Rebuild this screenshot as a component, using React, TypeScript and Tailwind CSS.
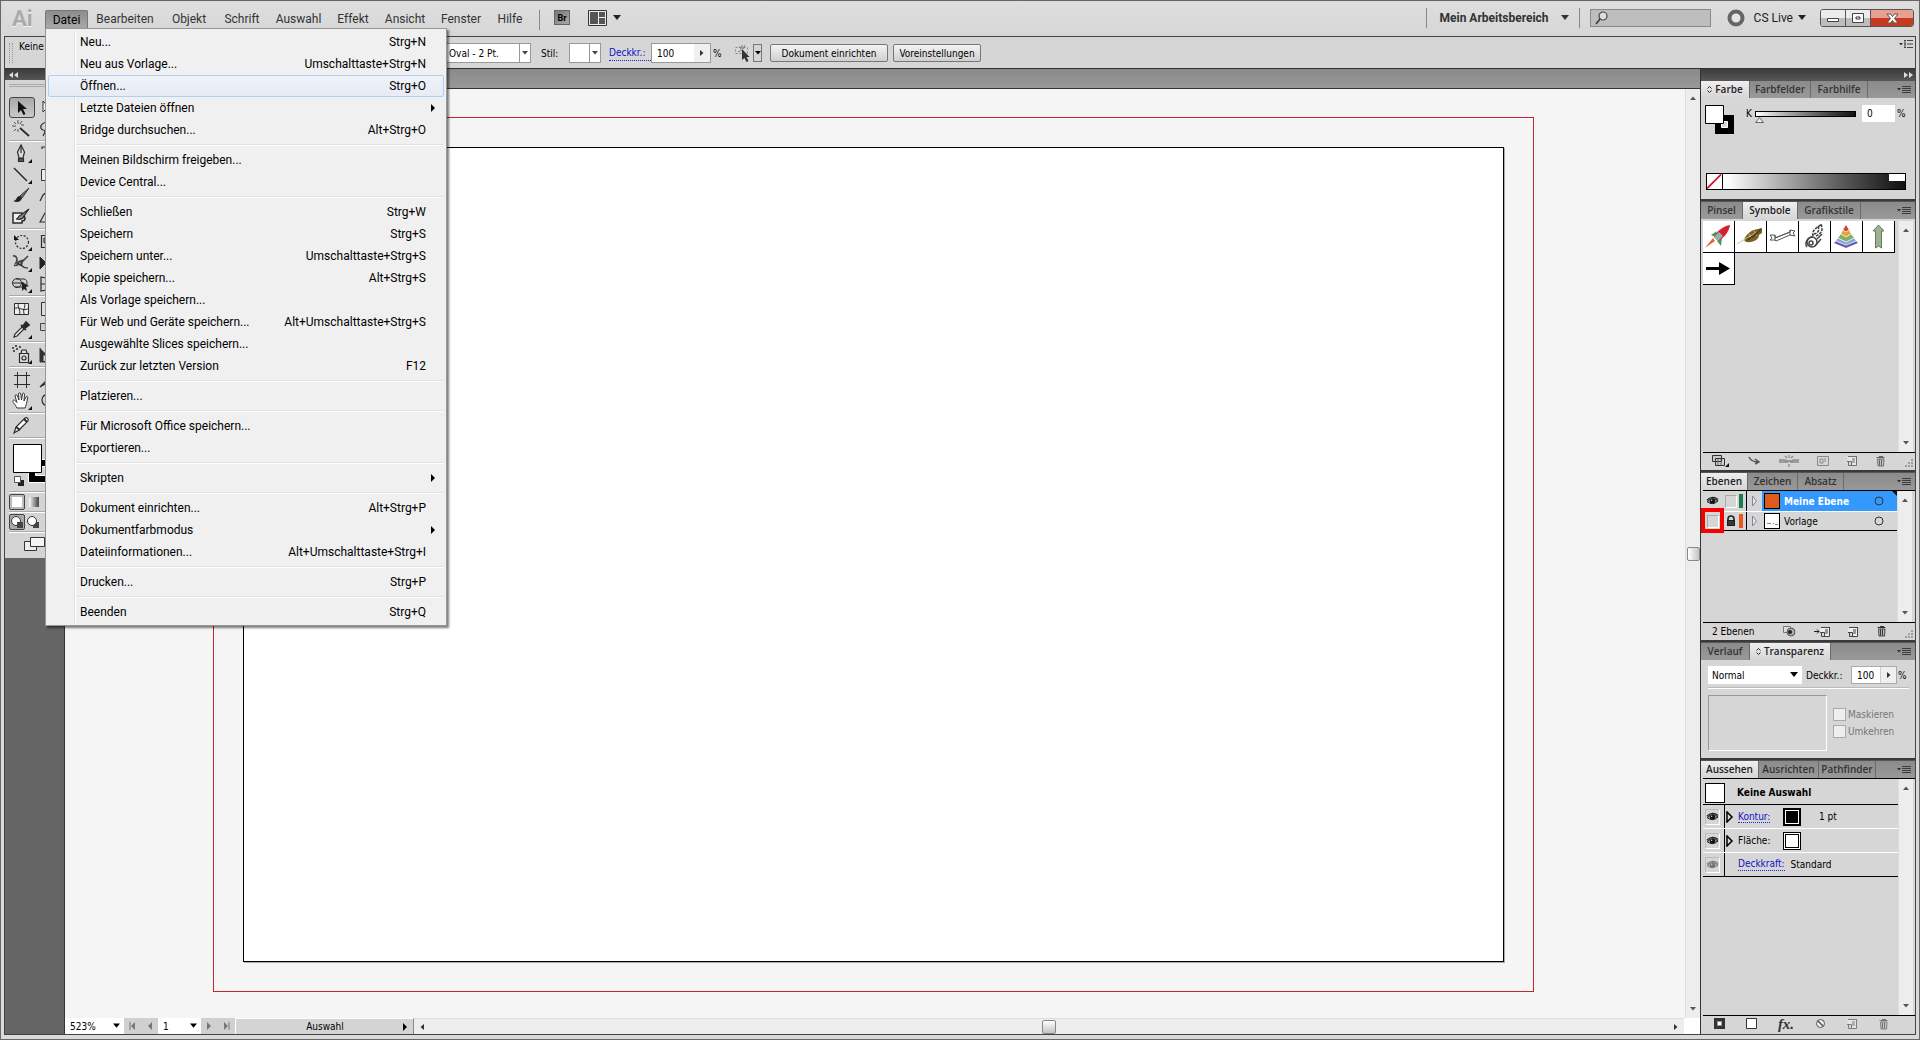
import React, { useState } from 'react';
import clsx from 'clsx';

type MenuEntry = { label: string; keys?: string; sub?: boolean } | null;

const FILE_MENU: MenuEntry[] = [
  { label: 'Neu...', keys: 'Strg+N' },
  { label: 'Neu aus Vorlage...', keys: 'Umschalttaste+Strg+N' },
  { label: 'Öffnen...', keys: 'Strg+O' },
  { label: 'Letzte Dateien öffnen', sub: true },
  { label: 'Bridge durchsuchen...', keys: 'Alt+Strg+O' },
  null,
  { label: 'Meinen Bildschirm freigeben...' },
  { label: 'Device Central...' },
  null,
  { label: 'Schließen', keys: 'Strg+W' },
  { label: 'Speichern', keys: 'Strg+S' },
  { label: 'Speichern unter...', keys: 'Umschalttaste+Strg+S' },
  { label: 'Kopie speichern...', keys: 'Alt+Strg+S' },
  { label: 'Als Vorlage speichern...' },
  { label: 'Für Web und Geräte speichern...', keys: 'Alt+Umschalttaste+Strg+S' },
  { label: 'Ausgewählte Slices speichern...' },
  { label: 'Zurück zur letzten Version', keys: 'F12' },
  null,
  { label: 'Platzieren...' },
  null,
  { label: 'Für Microsoft Office speichern...' },
  { label: 'Exportieren...' },
  null,
  { label: 'Skripten', sub: true },
  null,
  { label: 'Dokument einrichten...', keys: 'Alt+Strg+P' },
  { label: 'Dokumentfarbmodus', sub: true },
  { label: 'Dateiinformationen...', keys: 'Alt+Umschalttaste+Strg+I' },
  null,
  { label: 'Drucken...', keys: 'Strg+P' },
  null,
  { label: 'Beenden', keys: 'Strg+Q' },
];

const MENUS = [
  { label: 'Bearbeiten', width: 'w-[74px]' },
  { label: 'Objekt', width: 'w-[54px]' },
  { label: 'Schrift', width: 'w-[52px]' },
  { label: 'Auswahl', width: 'w-[61px]' },
  { label: 'Effekt', width: 'w-[48px]' },
  { label: 'Ansicht', width: 'w-[56px]' },
  { label: 'Fenster', width: 'w-[56px]' },
  { label: 'Hilfe', width: 'w-[42px]' },
];

/* ---------- small glyphs ---------- */

function Down({ className = '' }: { className?: string }) {
  return (
    <svg width="8" height="6" viewBox="0 0 8 6" className={clsx('shrink-0', className)}>
      <path d="M0 0h8L4 5z" fill="currentColor" />
    </svg>
  );
}

function DownSmall({ className = '' }: { className?: string }) {
  return (
    <svg width="6" height="4" viewBox="0 0 6 4" className={clsx('shrink-0', className)}>
      <path d="M0 0h6L3 3.5z" fill="currentColor" />
    </svg>
  );
}

function Side({ left = false, bar = false, className = '' }: { left?: boolean; bar?: boolean; className?: string }) {
  return (
    <svg width="7" height="8" viewBox="0 0 7 8" className={clsx('shrink-0', className, left && 'rotate-180')}>
      <path d="M1 0v8l4-4z" fill="currentColor" />
      {bar && <path d="M6 0v8" stroke="currentColor" />}
    </svg>
  );
}

function SideSmall({ left = false }: { left?: boolean }) {
  return (
    <svg width="4" height="6" viewBox="0 0 4 6" className={clsx('shrink-0 text-[#333]', left && 'rotate-180')}>
      <path d="M0 0v6l3.500-3z" fill="currentColor" />
    </svg>
  );
}

function Eye({ faded = false }: { faded?: boolean }) {
  return (
    <svg width="13" height="10" viewBox="0 0 13 10" className={clsx('shrink-0', faded && 'opacity-50')}>
      <path d="M1 5.5Q6.500 0 12 5Q6.500 10 1 5.500z" fill="#8a8a8a" stroke="#222" />
      <path d="M1 4Q6.500 -1 12 3.500" fill="none" stroke="#222" strokeWidth="1.200" />
      <circle cx="6.500" cy="5" r="2.600" fill="#111" />
      <circle cx="5.700" cy="4.200" r=".7" fill="#ddd" />
    </svg>
  );
}

function Lock() {
  return (
    <svg width="10" height="12" viewBox="0 0 10 12">
      <path d="M2 6V4a3 3 0 0 1 6 0v2" fill="none" stroke="#222" strokeWidth="1.600" />
      <path d="M1 5h8v6H1z" fill="#1c1c1c" />
      <path d="M2 7h6M2 9h6" stroke="#555" />
    </svg>
  );
}

function NewPage() {
  return (
    <svg width="11" height="11" viewBox="0 0 11 11">
      <path d="M.5 1.500h9v9h-5v-4h-4z" fill="#eee" />
      <path d="M0 6.500h4.500V10M9.500 1v9.500H1.500V7M1 1.500h8" fill="none" stroke="#444" />
      <path d="M5 3h3v5H5z" fill="#999" />
    </svg>
  );
}

function Trash() {
  return (
    <svg width="10" height="12" viewBox="0 0 10 12">
      <path d="M.5 2.500h8M3 1.500h4" stroke="#333" strokeWidth="1.200" />
      <path d="M1.500 4h6.500l-.5 7h-5.500z" fill="#bbb" stroke="#444" />
      <path d="M3.500 4.500v6M5.500 4.500v6" stroke="#333" />
    </svg>
  );
}

function Grip() {
  return (
    <svg width="9" height="9" viewBox="0 0 9 9">
      <path d="M8 0v2M8 3v2M8 6v2M5 3v2M5 6v2M2 6v2" stroke="#8a8a8a" strokeWidth="1.500" />
    </svg>
  );
}

function PanelMenuIcon() {
  return (
    <svg width="14" height="10" viewBox="0 0 14 10">
      <path d="M0 3h4L2 5.500z" fill="#2e2e2e" />
      <path d="M5 1.500h9M5 3.500h9M5 5.500h9M5 7.500h9" stroke="#3c3c3c" />
    </svg>
  );
}

/* ---------- tools ---------- */

const ink = { fill: 'none', stroke: '#2b2b2b', strokeWidth: 1.2 };

const TOOL_ICONS: Record<string, React.ReactNode> = {
  select: <path d="M7 3v12l3-3 2.500 5 2-1-2.500-5h4z" fill="#111" />,
  direct: <path d="M6 3v11l3-3 4 0z" fill="#fff" stroke="#333" />,
  wand: (
    <g {...ink}>
      <path d="M9 9l9 8" strokeWidth="1.800" />
      <path d="M7 1v4M1 7h4M7 10v3M10 6h3M3 3l2 2M11 2L9 5M3 12l2-2" stroke="#555" strokeWidth="1" />
    </g>
  ),
  lasso: <path d="M12 3C3 3 2 10 6 11c4 0 1 4 0 6" {...ink} />,
  pen: (
    <g {...ink}>
      <path d="M10 1L6.500 8l1.500 6h4l1.500-6z" fill="#ddd" />
      <path d="M10 1v8M7.500 14.500h5v3h-5z" fill="#555" />
    </g>
  ),
  type: <path d="M5 5V3h12v2M11 3v13" {...ink} />,
  line: <path d="M3 3l13 13" {...ink} strokeWidth="1.500" />,
  rect: <path d="M4.500 4.500h14v11h-14z" fill="#eee" stroke="#333" />,
  brush: (
    <g>
      <path d="M18 2L9 10l2 2 7-10z" fill="#777" stroke="#333" />
      <path d="M9 10c-4 0-3 5-7 5 4 2 8 1 9-3z" fill="#222" />
    </g>
  ),
  pencil: <path d="M3 15l3-6 9-7" {...ink} />,
  blob: (
    <g {...ink}>
      <path d="M2 6h9v3c4 0 4 5 0 5v2H2z" fill="#eee" strokeWidth="1.500" />
      <path d="M18 2l-8 6c-3 0-2 4-5 4 4 1 7 0 8-3z" fill="#888" />
    </g>
  ),
  eraser: <path d="M3 15l5-9h8l-4 9z" {...ink} />,
  rotate: (
    <g {...ink}>
      <circle cx="11" cy="10" r="6.500" strokeDasharray="2 1.500" />
      <path d="M3 3v5h5z" fill="#111" stroke="none" />
    </g>
  ),
  scale: <path d="M4.500 3.500h12v12h-12zM7 6h4M7 6v4l6 5" {...ink} />,
  warp: (
    <g {...ink}>
      <path d="M2 3c4-1 5 4 3 7 4-1 6 6 12 5M8 12L17 3M3 12c5 3 5-6 10-5" stroke="#444" strokeWidth="1.600" />
      <circle cx="9" cy="10" r="2" fill="#777" />
    </g>
  ),
  free: <path d="M3 4l6 6-6 6zM9 5h8v10H9z" fill="#222" stroke="#222" />,
  shape: (
    <g {...ink}>
      <circle cx="6" cy="9" r="4.500" fill="#ccc" strokeWidth="1" />
      <path d="M5 5h8c4 0 4 8 0 8H4M2 9h11" strokeWidth="1" />
      <path d="M11 8v9l2-2 3 2-1-4 3-1z" fill="#222" stroke="none" />
    </g>
  ),
  persp: <path d="M4 3l14 3v8L4 17zM4 10h14M9 4v12" {...ink} />,
  mesh: (
    <g {...ink} strokeWidth="1">
      <path d="M3.500 4.500h14v11h-14z" fill="#eee" />
      <path d="M8 4c-3 4 3 7 0 12M13 4c3 4-3 7 1 12M3 10c5-4 9 4 15-1" />
    </g>
  ),
  gradient: <path d="M4.500 3.500h14v13h-14z" fill="#ddd" stroke="#333" />,
  dropper: (
    <g {...ink}>
      <path d="M3 17l1-3 7-7 2 2-7 7z" fill="#eee" />
      <path d="M10 5l5 5M12 6l3-4 3 3-4 3z" fill="#222" strokeWidth="1.800" />
    </g>
  ),
  blend: <path d="M3.500 3.500h7v7h-7zM8.500 8.500h8v8h-8z" fill="#ccc" stroke="#444" />,
  spray: (
    <g {...ink}>
      <path d="M8.500 8.500h9v9h-9zM10 8l1-3h4l1 3" fill="#ddd" />
      <path d="M1 3h2M4 1h2M5 4h2M8 2h2M2 6h2" strokeWidth="1.500" />
      <circle cx="13" cy="13" r="2" />
    </g>
  ),
  graph: <path d="M3 3v14h14M6 16v-6h3v6" fill="#333" stroke="#333" />,
  artboard: <path d="M6.500 2v16M15.500 2v16M3 5.500h16M3 14.500h16" {...ink} strokeWidth="1" />,
  slice: <path d="M3 17L14 6l3 3-9 5z" {...ink} />,
  hand: (
    <path
      d="M6 17C4 13 1 11 2 9.500s3 1 4 2L4 5c0-1.500 2-1.500 2.500 0l1.500 4-.5-6c0-1.500 2-1.500 2.300 0L10.500 9l1-6c.3-1.500 2-1 2 .3L13 10l2-4c.7-1.200 2-.5 1.700.7C16 11 15 15 14 17z"
      fill="#fff"
      stroke="#333"
    />
  ),
  zoom: <circle cx="11" cy="9" r="6" {...ink} />,
  erase: (
    <g {...ink}>
      <path d="M3 17l2-6L14 2c2-1 4 1 3 3L8 14z" fill="#fff" />
      <path d="M5 11l4 3M13 3l3 3" strokeWidth="2" />
    </g>
  ),
};

const TOOL_GROUPS = [
  [['select', 'direct'], ['wand', 'lasso']],
  [['pen', 'type'], ['line', 'rect'], ['brush', 'pencil'], ['blob', 'eraser']],
  [['rotate', 'scale'], ['warp', 'free'], ['shape', 'persp']],
  [['mesh', 'gradient'], ['dropper', 'blend']],
  [['spray', 'graph']],
  [['artboard', 'slice'], ['hand', 'zoom']],
  [['erase']],
];

const FLYOUTS = ['pen', 'line', 'rotate', 'warp', 'shape', 'dropper', 'spray', 'hand'];

function Tool({ name }: { name: string }) {
  return (
    <button
      aria-label={name}
      className={clsx(
        'flex h-[21px] w-[26px] items-center justify-center',
        name === 'select' && 'rounded-[3px] border border-[#444] bg-gradient-to-b from-[#a9a9a9] to-[#c9c9c9]',
      )}
    >
      <svg width="22" height="20" viewBox="0 0 22 20" className="shrink-0">
        {TOOL_ICONS[name]}
        {FLYOUTS.includes(name) && <path d="M21 15v4h-4z" fill="#111" />}
      </svg>
    </button>
  );
}

function Rule() {
  return <div className="my-px h-[2px] border-t border-[#aaa] bg-white" />;
}

function Toolbox() {
  return (
    <aside className="w-[59px] shrink-0 bg-[#656565]">
      <div className="flex h-[11px] items-center bg-gradient-to-b from-[#3c3c3c] to-[#555] pl-1 text-[#ddd]">
        <svg width="9" height="6" viewBox="0 0 9 6"><path d="M4 0v6L0 3zM9 0v6L5 3z" fill="currentColor" /></svg>
      </div>
      <div className="bg-[#d4d4d4] pb-1 pl-1">
        <div className="h-[17px] pt-1"><div className="h-[3px] border-y border-[#aaa]" /></div>
        {TOOL_GROUPS.map((group, i) => (
          <div key={i}>
            {group.map((row) => (
              <div key={row[0]} className="flex">
                {row.map((t) => <Tool key={t} name={t} />)}
              </div>
            ))}
            <Rule />
          </div>
        ))}
        <svg width="54" height="50" viewBox="0 0 54 50" className="block">
          <path d="M19.500 19.500h27v23h-27z" fill="#000" stroke="#fff" />
          <path d="M26.500 26.500h13v9h-13z" fill="#d4d4d4" stroke="#fff" />
          <path d="M4.500 4.500h28v28h-28z" fill="#fff" stroke="#000" />
          <path d="M9 40h6v6H9z" fill="#222" />
          <path d="M5.500 36.500h6v6h-6z" fill="#fff" stroke="#555" />
        </svg>
        <Rule />
        <div className="flex h-4 items-center gap-1">
          <button aria-label="Farbe" className="h-4 w-4 rounded-[2px] border border-[#444] bg-[#bbb] p-[2px]"><span className="block h-full bg-white" /></button>
          <button aria-label="Verlauf" className="h-[10px] w-[10px] bg-gradient-to-r from-white to-[#444]" />
        </div>
        <Rule />
        <div className="flex h-4 items-center gap-px">
          {[0, 1].map((n) => (
            <button key={n} aria-label={n ? 'Dahinter zeichnen' : 'Normal zeichnen'} className={clsx('h-4 w-4', !n && 'rounded-[2px] border border-[#444] bg-[#aaa]')}>
              <svg width="14" height="14" viewBox="0 0 14 14">
                <path d="M7 7h6v6H7z" fill="#444" />
                <circle cx="6" cy="6" r="4.500" fill="#fff" stroke="#333" />
                {!n && <path d="M7 7h6v6H7z" fill="#444" />}
              </svg>
            </button>
          ))}
        </div>
        <Rule />
        <svg width="40" height="20" viewBox="0 0 40 20" className="block">
          <path d="M15.500 7.500h12v9h-12z" fill="#eee" stroke="#333" />
          <path d="M21.500 3.500h14v9h-14z" fill="#f5f5f5" stroke="#333" />
        </svg>
      </div>
    </aside>
  );
}

/* ---------- top bars ---------- */

function FileMenu() {
  return (
    <div
      role="menu"
      className="absolute left-0 top-full z-20 w-[402px] border border-[#979797] bg-[#f0f0f0] p-[2px] text-black shadow-[2px_2px_2px_rgba(0,0,0,0.5)]"
    >
      <div className="absolute inset-y-[2px] left-[28px] w-[2px] border-l border-[#e0e0e0] bg-white" />
      {FILE_MENU.map((item, i) =>
        item ? (
          <button
            key={i}
            role="menuitem"
            className={clsx(
              'relative flex h-[22px] w-full items-center rounded-[2px] border pl-[31px] text-left',
              item.label === 'Öffnen...' ? 'border-[#aecff7] bg-gradient-to-b from-[#f0f2f7] to-[#e6ebf5]' : 'border-transparent',
            )}
          >
            <span className="flex-1">{item.label}</span>
            {item.keys && <span className="pr-[17px]">{item.keys}</span>}
            {item.sub && <Side className="mr-[6px]" />}
          </button>
        ) : (
          <div key={i} className="ml-7 flex h-2 items-center">
            <div className="h-[2px] w-full border-t border-[#e0e0e0] bg-white" />
          </div>
        ),
      )}
    </div>
  );
}

function MenuBar() {
  const [open, setOpen] = useState(true);
  return (
    <header className="flex h-[34px] items-start justify-between bg-gradient-to-b from-[#dedede] to-[#d6d6d6] text-[12px] leading-4 text-[#333]">
      <nav className="flex items-start pt-2">
        <span className="w-[41px] pl-2 text-[22px] font-bold leading-[18px] text-[#aaa] [text-shadow:0_1px_0_#f4f4f4]">Ai</span>
        <div className="relative">
          <button
            onClick={() => setOpen(!open)}
            className="block h-[18px] w-[43px] rounded-t-[2px] border border-b-0 border-[#777] bg-gradient-to-b from-[#8d8d8d] to-[#a8a8a8] text-black"
          >
            Datei
          </button>
          {open && <FileMenu />}
        </div>
        {MENUS.map((m) => (
          <button key={m.label} className={clsx('h-[18px] whitespace-nowrap', m.width)}>{m.label}</button>
        ))}
        <div className="ml-2 h-5 border-l border-[#888]" />
        <button className="ml-[14px] h-[15px] w-4 border border-[#666] bg-gradient-to-br from-[#777] to-[#aaa] text-[9px] font-bold leading-3 text-black">Br</button>
        <button aria-label="Dokumente anordnen" className="ml-[18px] flex items-center gap-[6px] text-[#222]">
          <svg width="19" height="16" viewBox="0 0 19 16">
            <path d="M.5.5h18v15H.5z" fill="#eee" stroke="#333" />
            <path d="M2 2h8v12H2zM11 2h6v5h-6zM11 8h6v6h-6z" fill="#555" />
          </svg>
          <Down />
        </button>
      </nav>
      <div className="flex items-center pt-[6px] pr-[2px]">
        <div className="h-5 border-l border-[#888]" />
        <button className="ml-3 flex items-center gap-3 font-bold">Mein Arbeitsbereich<Down /></button>
        <div className="ml-[10px] h-5 border-l border-[#888]" />
        <label className="ml-[10px] flex h-[18px] w-[121px] items-center border border-[#888] bg-[#bebebe] pl-1">
          <svg width="14" height="14" viewBox="0 0 14 14" className="shrink-0">
            <circle cx="8" cy="5" r="4" fill="#ddd" stroke="#444" strokeWidth="1.200" />
            <path d="M5 8l-4 5" stroke="#333" strokeWidth="1.500" />
          </svg>
          <input aria-label="Suchen" className="w-full min-w-0 bg-transparent outline-none" />
        </label>
        <svg width="18" height="18" viewBox="0 0 18 18" className="ml-4">
          <circle cx="9" cy="9" r="6.500" fill="#e6e6e6" stroke="#666" strokeWidth="4" />
        </svg>
        <button className="ml-[9px] flex items-center gap-[5px] whitespace-nowrap text-[#222]">CS Live<Down /></button>
        <div className="ml-[14px] flex h-[18px] overflow-hidden rounded-[3px] border border-[#555]">
          <button aria-label="Minimieren" className="flex w-[25px] items-center justify-center border-r border-[#555] bg-gradient-to-b from-[#ececec] from-50% to-[#bdbdbd] to-50%">
            <svg width="12" height="10" viewBox="0 0 12 10"><path d="M.5 5.500h11v3H.5z" fill="#fff" stroke="#444" /></svg>
          </button>
          <button aria-label="Maximieren" className="flex w-[25px] items-center justify-center border-r border-[#555] bg-gradient-to-b from-[#ececec] from-50% to-[#bdbdbd] to-50%">
            <svg width="12" height="10" viewBox="0 0 12 10"><path d="M.5.5h11v9H.5z" fill="#fff" stroke="#444" /><path d="M4 4h4v2H4z" fill="#fff" stroke="#333" /></svg>
          </button>
          <button aria-label="Schließen" className="flex w-[42px] items-center justify-center bg-gradient-to-b from-[#e8a090] from-50% to-[#c63a22] to-50%">
            <svg width="13" height="11" viewBox="0 0 13 11">
              <path d="M1 1h3.500l2 2.500L8.500 1H12L8.500 5.500 12 10H8.500l-2-2.500-2 2.500H1l3.500-4.500z" fill="#fff" stroke="#555" />
            </svg>
          </button>
        </div>
      </div>
    </header>
  );
}

function ControlBar() {
  return (
    <div className="flex h-8 items-start justify-between border-t border-[#444] bg-[#d6d6d6] text-[10px]">
      <div className="flex items-center pt-1">
        <div className="ml-1 h-5 w-1 border-x border-dotted border-[#999]" />
        <span className="ml-[6px] w-[424px] pb-3 leading-3">Keine Auswahl</span>
        <div className="flex h-5 w-[88px] border border-[#999] bg-white">
          <input aria-label="Pinseldefinition" defaultValue="Oval - 2 Pt." className="w-0 flex-1 pl-[5px] outline-none" />
          <button aria-label="Pinsel wählen" className="flex w-[11px] items-center justify-center border-l border-[#999] text-[#444]"><DownSmall /></button>
        </div>
        <span className="ml-[10px] w-[28px]">Stil:</span>
        <div className="flex h-5 w-8 border border-[#999] bg-white">
          <span className="flex-1" />
          <button aria-label="Grafikstil" className="flex w-[11px] items-center justify-center border-l border-[#999] text-[#444]"><DownSmall /></button>
        </div>
        <a href="#" className="ml-2 w-[42px] whitespace-nowrap border-b border-dotted border-[#22c] leading-[14px] text-[#1111cc]">Deckkr.:</a>
        <div className="flex h-5 w-[60px] border border-[#999] bg-white">
          <input aria-label="Deckkraft" defaultValue="100" className="w-0 flex-1 pl-[5px] outline-none" />
          <button aria-label="Deckkraft wählen" className="flex w-4 items-center justify-center bg-[#f0f0f0]"><SideSmall /></button>
        </div>
        <span className="ml-[2px] w-[21px]">%</span>
        <button aria-label="Ähnliche Objekte auswählen" className="flex items-center gap-px">
          <svg width="18" height="18" viewBox="0 0 18 18">
            <path d="M1.500 3.500h12v6h-12z" fill="none" stroke="#888" strokeDasharray="2 2" />
            <path d="M8 1v4M5 2l2 3M11 1L9 5M4 8l4-2" stroke="#666" strokeWidth=".8" />
            <path d="M8 5v11l2.500-2 2 4 2-1-2-4h3z" fill="#333" />
          </svg>
          <span className="flex h-[18px] w-[9px] items-center justify-center border border-[#777]"><DownSmall /></span>
        </button>
        <button className="ml-2 h-[18px] w-[118px] whitespace-nowrap rounded-[2px] border border-[#777] bg-gradient-to-b from-[#f4f4f4] to-[#cfcfcf]">Dokument einrichten</button>
        <button className="ml-[5px] h-[18px] w-[88px] whitespace-nowrap rounded-[2px] border border-[#777] bg-gradient-to-b from-[#f4f4f4] to-[#cfcfcf]">Voreinstellungen</button>
      </div>
      <button aria-label="Bedienfeldmenü" className="pt-[3px] pr-[2px]">
        <svg width="14" height="9" viewBox="0 0 14 9">
          <path d="M0 3h4L2 5.500z" fill="#333" />
          <path d="M5 .500h2M8 .500h6M5 4h2M8 4h6M5 7.500h2M8 7.500h6M6 0v8" stroke="#444" />
        </svg>
      </button>
    </div>
  );
}

/* ---------- document ---------- */

function VScroll({ thumb = false }: { thumb?: boolean }) {
  return (
    <div className="flex w-[15px] shrink-0 flex-col items-center justify-between border-l border-[#ddd] bg-[#ededed] py-[7px] text-[#555]">
      <DownSmall className="rotate-180" />
      {thumb && <div className="h-[14px] w-[13px] rounded-[2px] border border-[#888] bg-gradient-to-r from-white to-[#c4c4c4]" />}
      <DownSmall />
    </div>
  );
}

function StatusBar() {
  return (
    <div className="flex h-4 shrink-0 bg-[#d0d0d0] text-[10px]">
      <div className="flex w-[59px] items-center bg-white pr-1">
        <input aria-label="Zoom" defaultValue="523%" className="w-0 flex-1 pl-[5px] outline-none" />
        <Down className="w-[7px]" />
      </div>
      <div className="flex w-[34px] items-center justify-around text-[#777]"><Side left bar /><Side left /></div>
      <div className="flex w-[43px] items-center bg-white pr-1">
        <input aria-label="Zeichenfläche" defaultValue="1" className="w-0 flex-1 pl-[5px] outline-none" />
        <Down className="w-[7px]" />
      </div>
      <div className="flex w-[34px] items-center justify-around text-[#777]"><Side /><Side bar /></div>
      <button className="flex w-[179px] items-center border-l border-t border-white border-r border-r-[#888] bg-[#d4d4d4] pl-3 pr-1">
        <span className="flex-1">Auswahl</span>
        <Side className="h-[10px]" />
      </button>
      <div className="flex flex-1 items-center justify-between border-t border-[#ddd] bg-[#ededed] px-[6px]">
        <SideSmall left />
        <div className="h-[14px] w-[14px] rounded-[2px] border border-[#888] bg-gradient-to-b from-white to-[#c4c4c4]" />
        <SideSmall />
      </div>
      <div className="w-4 bg-white" />
    </div>
  );
}

function DocumentArea() {
  return (
    <main className="flex min-w-0 flex-1 flex-col border-l border-[#333]">
      <div className="h-5 border-b border-[#333] bg-gradient-to-b from-[#8a8a8a] to-[#989898]" />
      <div className="flex min-h-0 flex-1">
        <div className="flex flex-1 bg-[#f5f5f5] pt-7 pr-[151px] pb-[26px] pl-[148px]">
          <div className="flex flex-1 border border-[#c1272d] p-[29px]">
            <div className="flex-1 border border-black bg-white shadow-[1px_1px_0_#aaa]" />
          </div>
        </div>
        <VScroll thumb />
      </div>
      <StatusBar />
    </main>
  );
}

/* ---------- panels ---------- */

interface Tab {
  label: string;
  width: string;
  active?: boolean;
  expander?: boolean;
}

function Tabs({ tabs }: { tabs: Tab[] }) {
  return (
    <div className="flex h-[18px] shrink-0 items-stretch border-t border-[#555] bg-gradient-to-b from-[#8b8b8b] to-[#999]">
      {tabs.map((t) => (
        <button
          key={t.label}
          className={clsx(
            "flex items-center justify-center gap-[3px] whitespace-nowrap border-r border-[#6b6b6b] font-['Open_Sans','Noto_Sans',sans-serif] text-[10px] font-semibold",
            t.width,
            t.active ? 'bg-gradient-to-b from-[#eee] to-[#d6d6d6] text-[#222]' : 'text-[#333]',
          )}
        >
          {t.expander && (
            <svg width="5" height="7" viewBox="0 0 5 7"><path d="M.5 2.500l2-2 2 2M.5 4.500l2 2 2-2" fill="none" stroke="#222" /></svg>
          )}
          {t.label}
        </button>
      ))}
      <div className="flex flex-1 items-center justify-end pr-1"><button aria-label="Bedienfeldmenü"><PanelMenuIcon /></button></div>
    </div>
  );
}

function ColorPanel() {
  return (
    <section className="border-b-2 border-[#3a3a3a]">
      <Tabs
        tabs={[
          { label: 'Farbe', width: 'w-[49px]', active: true, expander: true },
          { label: 'Farbfelder', width: 'w-[61px]' },
          { label: 'Farbhilfe', width: 'w-[57px]' },
        ]}
      />
      <div className="flex h-[101px] flex-col justify-between px-1 pt-[7px] pb-[9px]">
        <div className="flex">
          <svg width="29" height="29" viewBox="0 0 29 29">
            <path d="M10 10h19v19H10z" />
            <path d="M16.500 16.500h6v6h-6z" fill="#d6d6d6" stroke="#fff" />
            <path d="M.5.5h18v18H.5z" fill="#fff" stroke="#000" />
          </svg>
          <label htmlFor="kvalue" className="ml-3 pt-[3px] leading-3">K</label>
          <div className="ml-[3px] w-[101px] pt-[6px]">
            <div className="h-[6px] border border-black bg-gradient-to-r from-white to-[#111]" />
            <svg width="9" height="6" viewBox="0 0 9 6"><path d="M.5 5.500h8l-4-5z" fill="#eee" stroke="#666" /></svg>
          </div>
          <input id="kvalue" defaultValue="0" className="ml-[6px] h-[17px] w-[33px] bg-white pl-[5px] outline-none" />
          <span className="ml-[2px] pt-[3px] leading-3">%</span>
        </div>
        <div className="ml-px flex h-[17px] w-[200px] border border-black bg-gradient-to-r from-white from-10% to-[#111]">
          <svg width="16" height="15" viewBox="0 0 16 15" className="border-r border-black bg-white"><path d="M0 15L15 0" stroke="#c8102e" strokeWidth="1.800" /></svg>
          <span className="ml-auto h-[7px] w-4 bg-white" />
        </div>
      </div>
    </section>
  );
}

const SYMBOLS: { name: string; art: React.ReactNode }[] = [
  {
    name: 'Rakete',
    art: (
      <g>
        <path d="M10 17l-8 10 10-7z" fill="#e8603a" />
        <path d="M8 14l6-4-2 6zM14 20l4 5 1-8z" fill="#3f9e54" />
        <path d="M27 4c-7 1-13 6-16 12l4 4c6-3 11-9 12-16z" fill="#d5202c" />
        <path d="M11 16l4 4 5-5-4-4z" fill="#8fb4b0" />
      </g>
    ),
  },
  {
    name: 'Feder',
    art: (
      <g>
        <path d="M27 7l-4 1c-7 1-12 5-14 11l2 2c8 1 13-3 13-7l3-2z" fill="#7b6226" />
        <path d="M25 9L2 23M14 13l3 5M19 10l3 5" stroke="#cdbf8d" fill="none" />
        <path d="M26 8c-5 5-7 8-14 11" stroke="#55441a" fill="none" strokeWidth="2" />
      </g>
    ),
  },
  {
    name: 'Banner',
    art: <path d="M3 14l5 0v3l15-6v-2l5 1-2 2 2 3-5-1-14 6-1-1-5 0 2-2zM8 14v5M23 9v5M8 17l15-6" fill="#fff" stroke="#555" />,
  },
  {
    name: 'Ornament',
    art: (
      <g fill="none" stroke="#444" strokeWidth="1.500">
        <path d="M22 3c3 7-1 10-5 12M22 4c-8 4-10 9-7 12M19 5c2 4 0 8-5 8" strokeDasharray="3 1" />
        <circle cx="13" cy="21" r="5" />
        <circle cx="12" cy="22" r="2" />
        <path d="M8 26c-3-4 1-10 6-10M18 18l5-5M16 25l6-7" />
      </g>
    ),
  },
  {
    name: 'Pyramide',
    art: (
      <g>
        <path d="M15 4l3 5-3 2-3-2z" fill="#cf4a2d" />
        <path d="M12 9l3 2 3-2 2 4-5 3-5-3z" fill="#e7a03c" />
        <path d="M10 13l5 3 5-3 3 4-8 4-8-4z" fill="#7fb05c" />
        <path d="M7 17l8 4 8-4 2 3-10 4-10-4z" fill="#7fa6dd" />
        <path d="M5 20l10 4 10-4 2 2-12 5-12-5z" fill="#6a5cb8" />
        <path d="M12 9l3 2 3-2M10 13l5 3 5-3M7 17l8 4 8-4M5 20l10 4 10-4" fill="none" stroke="#fff" strokeWidth=".7" />
      </g>
    ),
  },
  { name: 'Pfeil oben', art: <path d="M15.500 4L21 10h-2.500v17l-3-2-3 2V10H10z" fill="#9cb391" stroke="#66795d" /> },
  { name: 'Pfeil rechts', art: <path d="M3 14h13V9l11 6.500L16 22v-5H3z" fill="#000" /> },
];

function SymbolsPanel() {
  return (
    <section className="border-b-2 border-[#3a3a3a]">
      <Tabs
        tabs={[
          { label: 'Pinsel', width: 'w-[42px]' },
          { label: 'Symbole', width: 'w-[55px]', active: true },
          { label: 'Grafikstile', width: 'w-[63px]' },
        ]}
      />
      <div className="ml-[2px] flex h-[234px] border-b border-black pt-[2px] pr-[2px]">
        <div className="flex flex-1 flex-wrap content-start">
          {SYMBOLS.map((s) => (
            <button key={s.name} aria-label={s.name} className="h-8 w-8 border-r border-b border-black bg-white">
              <svg width="31" height="31" viewBox="0 0 31 31">{s.art}</svg>
            </button>
          ))}
        </div>
        <VScroll />
      </div>
      <div className="flex h-[17px] items-center justify-between pb-[2px] pl-[11px] pr-[2px]">
        <svg width="18" height="12" viewBox="0 0 18 12">
          <path d="M.5.5h9v6h-9zM3.500 3.500h9v7h-9z" fill="#ccc" stroke="#333" />
          <path d="M6 4v6M9 4v6" stroke="#555" strokeWidth=".8" />
          <path d="M17 8v4h-4z" fill="#111" />
        </svg>
        <svg width="12" height="9" viewBox="0 0 12 9"><path d="M1 1c2 4 5 5 9 5M7 3l4 3-4 2" fill="none" stroke="#555" strokeWidth="1.500" /></svg>
        <svg width="22" height="12" viewBox="0 0 22 12"><path d="M1 5h6l2 2H1M21 5h-6l-2 2h8M8 6h6M11 0v3M11 9v3M7 1l2 2M15 1l-2 2" fill="none" stroke="#888" strokeWidth="1.300" /></svg>
        <svg width="12" height="10" viewBox="0 0 12 10"><path d="M.5.5h11v9H.5zM3 3h3v4H3zM7 3h2M7 5h2" fill="none" stroke="#888" /></svg>
        <span className="opacity-70"><NewPage /></span>
        <span className="opacity-70"><Trash /></span>
        <span className="self-end"><Grip /></span>
      </div>
    </section>
  );
}

function LayerRow({ name, color, active, locked }: { name: string; color: string; active?: boolean; locked?: boolean }) {
  return (
    <li className={clsx('flex border-b', active ? 'h-[21px] border-white' : 'h-[19px] border-black')}>
      <button aria-label={`${name} ein-/ausblenden`} className="relative flex w-[19px] items-center justify-center">
        {active ? <Eye /> : <span className="h-[13px] w-3 border border-[#aaa] border-r-white border-b-white" />}
        {/* marks the empty visibility cell */}
        {locked && <span className="absolute -top-1 -left-[2px] h-[25px] w-[23px] border-4 border-[#f60000]" />}
      </button>
      <button aria-label={`${name} fixieren`} className="flex w-[17px] items-center justify-center">
        {locked ? <Lock /> : <span className="h-[13px] w-3 border border-[#aaa] border-r-white border-b-white" />}
      </button>
      <span className="flex w-2 items-center border-r border-black"><span className={clsx('h-[14px] w-1', color)} /></span>
      <svg width="15" height="12" viewBox="0 0 15 12" className="shrink-0 self-center"><path d="M5.500 1v10l4-5z" fill="#e8e8e8" stroke="#7a8a99" /></svg>
      <div className={clsx('relative flex flex-1 items-center pl-[2px]', active && 'bg-[#3399ff] font-bold text-white')}>
        <span className={clsx('h-4 w-4 border border-black', active ? 'bg-[#e05a1a]' : 'bg-white')}>
          {!active && <svg width="14" height="14" viewBox="0 0 14 14"><path d="M2 9.500h4M8 9.500h1M10 10.500h3" stroke="#888" /></svg>}
        </span>
        <span className="ml-1 flex-1">{name}</span>
        <svg width="10" height="10" viewBox="0 0 10 10" className="mr-[13px]"><circle cx="5" cy="5" r="4" fill="none" stroke="#333" /></svg>
        {active && <svg width="5" height="5" viewBox="0 0 5 5" className="absolute top-0 right-0"><path d="M0 0h5v5z" fill="#111" /></svg>}
      </div>
    </li>
  );
}

function LayersPanel() {
  return (
    <section className="border-b-2 border-[#3a3a3a]">
      <Tabs
        tabs={[
          { label: 'Ebenen', width: 'w-[47px]', active: true },
          { label: 'Zeichen', width: 'w-[50px]' },
          { label: 'Absatz', width: 'w-[46px]' },
        ]}
      />
      <div className="ml-[2px] flex h-[133px] border-y border-black pr-[3px]">
        <ul className="flex-1">
          <LayerRow name="Meine Ebene" color="bg-[#15804a]" active />
          <LayerRow name="Vorlage" color="bg-[#e8571c]" locked />
        </ul>
        <VScroll />
      </div>
      <div className="flex h-[17px] items-center justify-between pb-px pl-[11px] pr-[2px]">
        <span className="w-[54px]">2 Ebenen</span>
        <svg width="13" height="11" viewBox="0 0 13 11"><path d="M.5.5h7v6h-7z" fill="#ddd" stroke="#777" /><circle cx="8" cy="6" r="4" fill="#aaa" stroke="#555" /><circle cx="7" cy="6" r="2" fill="#222" /></svg>
        <span className="flex items-center"><svg width="6" height="7" viewBox="0 0 6 7"><path d="M0 3.500h5M3 1.500l2 2-2 2" fill="none" stroke="#222" /></svg><NewPage /></span>
        <NewPage />
        <Trash />
        <span className="self-end"><Grip /></span>
      </div>
    </section>
  );
}

function TransparencyPanel() {
  return (
    <section className="border-b-2 border-[#3a3a3a]">
      <Tabs
        tabs={[
          { label: 'Verlauf', width: 'w-[49px]' },
          { label: 'Transparenz', width: 'w-[81px]', active: true, expander: true },
        ]}
      />
      <div className="h-[98px] pt-[6px] pr-[6px] pl-[7px]">
        <div className="flex items-center">
          <div className="relative flex h-[18px] w-[94px] items-center bg-white">
            <select aria-label="Füllmethode" className="h-full w-full appearance-none pl-1 outline-none">
              <option>Normal</option>
            </select>
            <Down className="pointer-events-none absolute right-1" />
          </div>
          <label htmlFor="tdeck" className="ml-1 w-[45px] whitespace-nowrap">Deckkr.:</label>
          <div className="flex h-[18px] w-[46px] border border-[#aaa] bg-white">
            <input id="tdeck" defaultValue="100" className="w-0 flex-1 pl-[5px] outline-none" />
            <button aria-label="Deckkraft wählen" className="flex w-4 items-center justify-center border-l border-[#ccc] bg-[#f0f0f0]"><SideSmall /></button>
          </div>
          <span className="ml-px">%</span>
        </div>
        <div className="mt-[3px] h-[2px] border-t border-[#bbb] bg-white" />
        <div className="mt-[6px] flex">
          <div className="h-14 w-[119px] border border-[#999] border-r-white border-b-white" />
          <div className="ml-[6px] flex flex-col justify-center gap-1 text-[#777]">
            {['Maskieren', 'Umkehren'].map((l) => (
              <label key={l} className="flex items-center gap-[2px] leading-[13px]">
                <input type="checkbox" disabled className="h-[13px] w-[13px] appearance-none border border-[#aaa] bg-[#eee]" />
                {l}
              </label>
            ))}
          </div>
        </div>
      </div>
    </section>
  );
}

function EyeCell({ faded = false }: { faded?: boolean }) {
  return (
    <button aria-label="Sichtbarkeit" className="mr-px flex w-[22px] items-center border-r border-black pl-[2px]">
      <span className="flex h-4 w-[15px] items-center border border-[#bbb] border-r-white border-b-white"><Eye faded={faded} /></span>
    </button>
  );
}

function Disclosure() {
  return <svg width="8" height="12" viewBox="0 0 8 12" className="mr-1 self-center"><path d="M1 1v10l5-5z" fill="none" stroke="#000" strokeWidth="1.500" /></svg>;
}

function AppearancePanel() {
  const link = 'border-b border-dotted border-[#22c] leading-3 text-[#1111cc]';
  return (
    <section className="flex min-h-0 flex-1 flex-col">
      <Tabs
        tabs={[
          { label: 'Aussehen', width: 'w-[58px]', active: true },
          { label: 'Ausrichten', width: 'w-[60px]' },
          { label: 'Pathfinder', width: 'w-[57px]' },
        ]}
      />
      <div className="ml-[2px] flex min-h-0 flex-1 border-y border-black pr-[2px]">
        <div className="flex-1">
          <div className="flex h-[26px] items-center border-b border-black pt-[2px] pl-[2px]">
            <span className="h-5 w-5 border border-black bg-white" />
            <span className="ml-[12px] text-[10px] font-bold">Keine Auswahl</span>
          </div>
          <div className="flex h-6 border-b border-white">
            <EyeCell />
            <Disclosure />
            <div className="flex flex-1 items-center">
              <span className="w-[45px]"><a href="#" className={link}>Kontur:</a></span>
              <span className="h-[18px] w-[18px] border border-black bg-black p-px"><span className="block h-full border border-white" /></span>
              <span className="ml-[18px]">1 pt</span>
            </div>
          </div>
          <div className="flex h-6 border-b border-white">
            <EyeCell />
            <Disclosure />
            <div className="flex flex-1 items-center">
              <span className="w-[45px]">Fläche:</span>
              <span className="h-[18px] w-[18px] border border-black bg-white p-px"><span className="block h-full border border-black" /></span>
            </div>
          </div>
          <div className="flex h-6 border-b border-black">
            <EyeCell faded />
            <div className="flex items-center pl-3"><a href="#" className={link}>Deckkraft:</a><span className="ml-[6px]">Standard</span></div>
          </div>
        </div>
        <VScroll />
      </div>
      <div className="flex h-[18px] items-center justify-between pb-[3px] pl-[13px] pr-[26px]">
        <svg width="11" height="11" viewBox="0 0 11 11"><path d="M0 0h11v11H0z" fill="#333" /><path d="M3.500 3.500h4v4h-4z" fill="#fff" stroke="#999" /></svg>
        <svg width="11" height="11" viewBox="0 0 11 11"><path d="M.5.5h10v10H.5z" fill="#fff" stroke="#333" /></svg>
        <span className="font-['Liberation_Serif',serif] text-[15px] font-bold italic leading-4 text-[#333]">fx.</span>
        <svg width="11" height="11" viewBox="0 0 11 11"><circle cx="5.500" cy="5.500" r="4" fill="#eee" stroke="#555" /><path d="M3 3l5 5" stroke="#555" strokeWidth="1.500" /></svg>
        <span className="opacity-60"><NewPage /></span>
        <span className="opacity-60"><Trash /></span>
      </div>
    </section>
  );
}

export default function App() {
  return (
    <div className="flex h-screen flex-col border border-[#6a6668] bg-[#dadada] px-[3px] pt-px pb-1 font-[Roboto,'Noto_Sans',sans-serif] text-black">
      <MenuBar />
      <div className="flex min-h-0 flex-1 flex-col border-x border-b border-[#444] font-['DejaVu_Sans_Condensed','Noto_Sans',sans-serif] text-[10px]">
        <ControlBar />
        <div className="flex min-h-0 flex-1 border-t border-[#333]">
          <Toolbox />
          <DocumentArea />
          <div className="flex w-[215px] shrink-0 flex-col border-l border-[#333] bg-[#d6d6d6]">
            <div className="flex h-[11px] shrink-0 items-center justify-end bg-gradient-to-b from-[#3c3c3c] to-[#555] pr-[2px] text-[#ddd]">
              <svg width="9" height="6" viewBox="0 0 9 6"><path d="M0 0v6l4-3zM5 0v6l4-3z" fill="currentColor" /></svg>
            </div>
            <ColorPanel />
            <SymbolsPanel />
            <LayersPanel />
            <TransparencyPanel />
            <AppearancePanel />
          </div>
        </div>
      </div>
    </div>
  );
}
